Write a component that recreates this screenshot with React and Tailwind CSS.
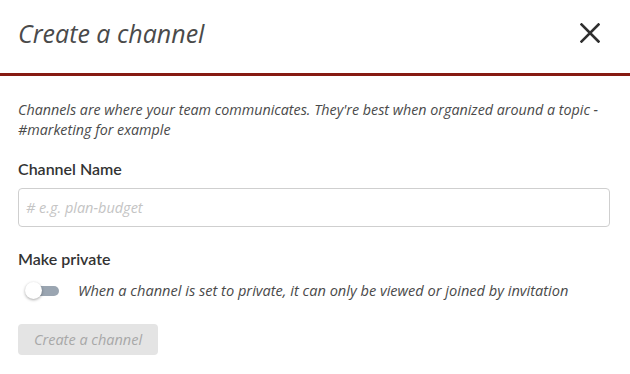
import React from "react";

export default function App() {
  return (
    <div className="w-[630px] h-[374px] bg-white overflow-hidden" style={{ fontFamily: '"Open Sans", sans-serif' }}>
      <div className="flex items-center justify-between h-[73px] pl-[18px] pr-[30px] pb-[7px]">
        <h1 className="text-[25px] italic text-[#4a4a4a] font-normal leading-none">Create a channel</h1>
        <svg width="20" height="20" viewBox="0 0 20 20">
          <path d="M1.5 1.5 L18.5 18.5 M18.5 1.5 L1.5 18.5" stroke="#2f2f2f" strokeWidth="2.6" strokeLinecap="square" />
        </svg>
      </div>
      <div className="h-[3px] bg-[#861a12]" />
      <div className="px-[18px] pt-[24px]">
        <p className="text-[14.3px] italic text-[#4a4a4a] leading-[20px]">
          Channels are where your team communicates. They're best when organized around a topic - #marketing for example
        </p>
        <div className="mt-[19px] text-[16px] font-semibold text-[#333] leading-[20px]" style={{ fontFamily: 'Lato, sans-serif' }}>Channel Name</div>
        <input
          className="block mt-[9px] w-[592px] h-[39px] border border-[#cfcfcf] rounded-[4px] px-[7px] text-[14.5px] italic outline-none placeholder:text-[#c4c4c4]"
          placeholder="# e.g. plan-budget"
        />
        <div className="mt-[22px] text-[16px] font-semibold text-[#333] leading-[20px]" style={{ fontFamily: 'Lato, sans-serif' }}>Make private</div>
        <div className="flex items-center mt-[12px] h-[20px]">
          <div className="relative w-[33px] h-[10px] ml-[8px] rounded-full bg-[#9aa5b1]">
            <div className="absolute left-[-1px] top-[-4px] w-[17px] h-[17px] rounded-full bg-white shadow-[0_1px_3px_rgba(0,0,0,0.35)]" />
          </div>
          <span className="ml-[19px] text-[14.6px] italic text-[#4a4a4a]">
            When a channel is set to private, it can only be viewed or joined by invitation
          </span>
        </div>
        <button className="block mt-[23px] w-[140px] h-[31px] rounded-[4px] bg-[#e4e4e4] text-[14.5px] italic text-[#a8a8a8]">
          Create a channel
        </button>
      </div>
    </div>
  );
}
